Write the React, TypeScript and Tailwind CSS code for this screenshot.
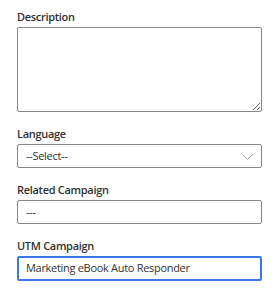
export default function App() {
  return (
    <div
      className="min-h-screen bg-white px-[17px] pt-[7px] text-[11px] tracking-[-0.3px] text-[#323130]"
      style={{ fontFamily: '"Open Sans", "Noto Sans", sans-serif' }}
    >
      {/* Description */}
      <div>
        <div className="h-[20px] leading-[20px] font-semibold">Description</div>
        <textarea className="block h-[85px] w-[245px] resize rounded-[2px] border border-[#8a8886] bg-white px-2 py-1 outline-none" />
      </div>

      {/* Language */}
      <div className="mt-3">
        <div className="h-[20px] leading-[20px] font-semibold">Language</div>
        <div className="flex h-[24px] w-[245px] items-center justify-between rounded-[2px] border border-[#8a8886] pr-[8px] pl-[8px]">
          <span>--Select--</span>
          <svg width="11" height="6" viewBox="0 0 11 6" fill="none" className="mt-[1px]">
            <path d="M0.5 0.5L5.5 5.5L10.5 0.5" stroke="#a19f9d" strokeWidth="1" />
          </svg>
        </div>
      </div>

      {/* Related Campaign */}
      <div className="mt-3">
        <div className="h-[20px] leading-[20px] font-semibold">Related Campaign</div>
        <div className="flex h-[24px] w-[245px] items-center rounded-[2px] border border-[#8a8886] px-[8px]">
          ---
        </div>
      </div>

      {/* UTM Campaign */}
      <div className="mt-3">
        <div className="h-[20px] leading-[20px] font-semibold">UTM Campaign</div>
        <div className="flex h-[25px] w-[245px] items-center rounded-[2px] border-2 border-[#3b78e7] px-[7px]">
          Marketing eBook Auto Responder
        </div>
      </div>
    </div>
  );
}
